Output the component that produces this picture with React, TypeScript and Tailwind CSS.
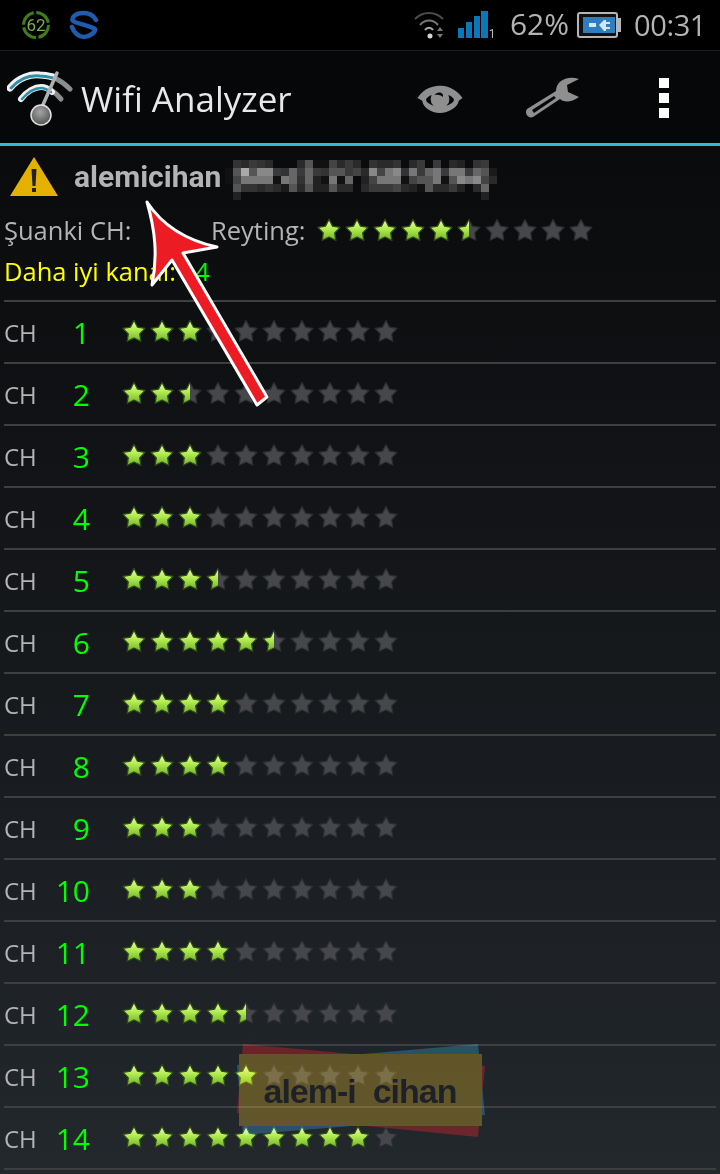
import React from "react";

const STAR = "M12 1.5 L15.5 8.1 L23 9.4 L17.7 14.9 L18.8 22.3 L12 19 L5.2 22.3 L6.3 14.9 L1 9.4 L8.5 8.1 Z";

function Star({ fill }: { fill: 0 | 0.5 | 1 }) {
  return (
    <svg width="24" height="24" viewBox="0 0 24 24" className="shrink-0 block">
      <path d={STAR} fill="#45474a" stroke="#2b2d30" strokeWidth="1.2" strokeLinejoin="round" />
      {fill > 0 && (
        <g clipPath={fill === 0.5 ? "url(#halfClip)" : undefined}>
          <path d={STAR} fill="url(#starGreen)" stroke="#2c4a14" strokeWidth="1.2" strokeLinejoin="round" />
        </g>
      )}
    </svg>
  );
}

function Stars({ value }: { value: number }) {
  return (
    <div className="flex gap-[4px]">
      {Array.from({ length: 10 }, (_, i) => (
        <Star key={i} fill={value >= i + 1 ? 1 : value >= i + 0.5 ? 0.5 : 0} />
      ))}
    </div>
  );
}

const rows: [number, number][] = [
  [1, 3], [2, 2.5], [3, 3], [4, 3], [5, 3.5], [6, 5.5], [7, 4],
  [8, 4], [9, 3], [10, 3], [11, 4], [12, 4.5], [13, 5], [14, 9],
];

const B = "transparent";
const pixels = [
  B,"#333","#2a2a2a","#3a3a3a","#333","#2a2a2a",B,B,B,"#2a2a2a","#555","#111","#111","#444","#2a2a2a","#3a3a3a","#2a2a2a",B,"#333","#2a2a2a","#2a2a2a","#333",B,"#2a2a2a","#3a3a3a",B,"#3a3a3a",B,"#2a2a2a","#222",B,"#333","#3a3a3a",B,
  "#111","#555","#aaa","#555","#888","#888","#3a3a3a","#333","#666","#3a3a3a","#666","#3a3a3a","#333","#555","#555","#3a3a3a","#444","#2a2a2a","#888","#444","#777","#888","#333","#777","#3a3a3a","#666","#777","#3a3a3a","#777","#777","#3a3a3a","#666","#555","#1a1a1a",
  "#111","#444","#777","#777","#777","#777","#111","#777","#666","#333","#666","#222","#111","#777","#111","#666","#0a0a0a","#222","#444","#777","#777","#777","#111","#444","#555","#555","#777","#111","#555","#888","#777","#888","#444","#2a2a2a",
  B,"#555","#333","#333","#2a2a2a","#333","#2a2a2a","#1a1a1a","#555","#2a2a2a","#555","#222","#222","#555","#2a2a2a","#2a2a2a",B,"#2a2a2a","#3a3a3a","#3a3a3a","#3a3a3a","#444","#2a2a2a","#222","#111","#555","#2a2a2a","#2a2a2a","#3a3a3a","#222",B,"#2a2a2a","#666",B,
  B,"#222",B,B,B,B,B,B,B,B,B,B,B,B,B,B,B,B,B,B,B,B,B,B,B,B,B,B,B,B,B,B,"#222",B,
];

function Wifi() {
  return (
    <svg width="66" height="64" viewBox="0 0 66 64" className="block">
      <defs>
        <radialGradient id="ball" cx="0.45" cy="0.35" r="0.7">
          <stop offset="0" stopColor="#a5a5a5" />
          <stop offset="1" stopColor="#4e4e4e" />
        </radialGradient>
      </defs>
      <path d="M3 23 C12 12 24 9 33 10 C44 10 54 15 63 24" fill="none" stroke="#8d8d8d" strokeWidth="5" strokeLinecap="round" />
      <path d="M3 23 C12 12 24 9 33 10 C38 10 42 11 46 12" fill="none" stroke="#f2f2f2" strokeWidth="7" strokeLinecap="round" />
      <path d="M4 23 C13 13 24 10 33 11 C38 11 42 12 46 13" fill="none" stroke="#2f8fa8" strokeWidth="3" strokeLinecap="round" />
      <path d="M14 34 C20 26 28 22 34 22 C41 22 48 27 54 34" fill="none" stroke="#8d8d8d" strokeWidth="5" strokeLinecap="round" />
      <path d="M14 34 C20 26 28 22 34 22 C38 22 42 24 45 27" fill="none" stroke="#f2f2f2" strokeWidth="6" strokeLinecap="round" />
      <path d="M15 34 C21 27 28 23 34 23 C38 23 41 25 44 27" fill="none" stroke="#2f8fa8" strokeWidth="2.5" strokeLinecap="round" />
      <path d="M50 8 L35 42" stroke="#b0b0b0" strokeWidth="3.5" strokeLinecap="round" />
      <circle cx="34" cy="50" r="10" fill="url(#ball)" stroke="#e2e2e2" strokeWidth="1.5" />
    </svg>
  );
}

function App() {
  return (
    <div className="relative w-[720px] h-[1174px] overflow-hidden bg-gradient-to-b from-[#070708] to-[#23282d] font-['Open_Sans','Roboto',sans-serif] text-[#b4b4b4]">
      <svg width="0" height="0" className="absolute">
        <defs>
          <linearGradient id="starGreen" x1="0" y1="0" x2="0" y2="1">
            <stop offset="0" stopColor="#eefcb0" />
            <stop offset="0.45" stopColor="#b2ec50" />
            <stop offset="1" stopColor="#70b22a" />
          </linearGradient>
          <clipPath id="halfClip"><rect x="0" y="0" width="12" height="24" /></clipPath>
        </defs>
      </svg>

      {/* Status bar */}
      <div className="h-[51px] bg-black border-b border-[#1c1c1c] flex items-center justify-between pl-[21px] pr-[14px]">
        <div className="flex items-center gap-[18px]">
          <svg width="30" height="30" viewBox="0 0 30 30" className="block">
            <circle cx="15" cy="15" r="12.5" fill="none" stroke="#3f7f1b" strokeWidth="3" strokeDasharray="17 2.6" />
            <text x="15" y="21" fontSize="17" textAnchor="middle" fill="#7bb04a" fontFamily="Roboto">62</text>
          </svg>
          <svg width="30" height="30" viewBox="0 0 30 30" className="block">
            <path d="M27 10 C24 4 18 3 14 3 C7 3 2 7 4 11 C6 13 22 16 26 19 C27 22 20 27 15 27 C10 27 5 23 3 17" fill="none" stroke="#1f5cb0" strokeWidth="4.5" strokeLinecap="round" strokeLinejoin="round" />
          </svg>
        </div>
        <div className="flex items-center">
          <svg width="34" height="30" viewBox="0 0 34 30" className="block">
            <path d="M2 9 C10 1 22 1 30 9" fill="none" stroke="#4c4c4c" strokeWidth="2" />
            <path d="M7 15 C12 9 20 9 25 15" fill="none" stroke="#777" strokeWidth="2" />
            <path d="M12 20 C14 17 18 17 20 20" fill="none" stroke="#aaa" strokeWidth="2" />
            <circle cx="17" cy="26" r="2.5" fill="#d5d5d5" />
            <path d="M24 21 L27 17 L30 21 Z M24 24 L27 28 L30 24 Z" fill="#777" />
          </svg>
          <svg width="38" height="30" viewBox="0 0 38 30" className="block ml-[11px]">
            <rect x="0" y="18" width="6" height="10" fill="#0a78b8" />
            <rect x="8" y="12" width="6" height="16" fill="#0a78b8" />
            <rect x="16" y="6" width="6" height="22" fill="#0a78b8" />
            <rect x="23" y="1" width="7" height="27" fill="#0a78b8" />
            <text x="34" y="28" fontSize="12" textAnchor="middle" fill="#bbb" fontFamily="Roboto">1</text>
          </svg>
          <span className="ml-[14px] -mt-[2px] text-[30px] leading-none text-[#b4b4b4]">62%</span>
          <svg width="44" height="26" viewBox="0 0 44 26" className="block ml-[8px]">
            <rect x="1" y="1" width="39" height="24" rx="2" fill="#111" stroke="#b5b5b5" strokeWidth="2" />
            <rect x="41" y="6" width="3" height="14" fill="#b5b5b5" />
            <rect x="6" y="5" width="32" height="16" fill="#2f7dbd" />
            <rect x="12" y="11" width="7" height="4" fill="#d5e5f2" />
            <path d="M22 13 L27 8 H29 V10 H33 V12 H29 V15 H33 V17 H29 V19 H27 Z" fill="#d5e5f2" />
          </svg>
          <span className="ml-[13px] -mt-[2px] text-[29px] tracking-[-0.4px] leading-none text-[#b4b4b4]">00:31</span>
        </div>
      </div>

      {/* Action bar */}
      <div className="relative h-[92px] flex items-center bg-[#060708]">
        <div className="ml-[7px]"><Wifi /></div>
        <span className="ml-[8px] mt-[3px] text-[35px] leading-none text-[#e8e8e8]">Wifi Analyzer</span>
        <div className="ml-auto flex items-center mt-[1px]">
          <svg width="48" height="30" viewBox="0 0 50 32" className="block mr-[61px]">
            <path d="M1 16 C8 5 18 3 26 3 C36 3 44 9 49 16 L45 19 C44 26 34 32 25 32 C15 32 7 26 6 19 Z" fill="#8f8f8f" />
            <path d="M10 18 C14 9 36 9 40 18 C37 27 13 27 10 18 Z" fill="#060708" />
            <circle cx="25" cy="17" r="10" fill="#8f8f8f" />
            <path d="M19 13 C22 8 30 10 28 15 C26 13 22 12 19 13 Z" fill="#060708" />
          </svg>
          <svg width="56" height="42" viewBox="0 0 56 42" className="block mr-[78px]">
            <path d="M2 32 L31 14 C31 5 41 -2 54 2 L42 8 L43 15 L54 20 C46 26 38 25 35 22 L8 40 C3 42 -1 36 2 32 Z" fill="#8f8f8f" />
            <path d="M7 33 L29 19 L31 21 L9 36 Z" fill="#060708" />
          </svg>
          <div className="flex flex-col gap-[5px] mr-[51px]">
            <div className="w-[10px] h-[10px] bg-white" />
            <div className="w-[10px] h-[10px] bg-white" />
            <div className="w-[10px] h-[10px] bg-white" />
          </div>
        </div>
      </div>
      <div className="h-[3px] bg-[#33b5e5]" />

      {/* Network info */}
      <div className="h-[155px] px-[4px] flex flex-col">
        <div className="h-[59px] flex items-center">
          <svg width="50" height="42" viewBox="0 0 50 42" className="block ml-[5px]">
            <path d="M25 2 L49 41 H1 Z" fill="#e5b100" />
            <path d="M22.5 14 H27.5 L26.5 31 H23.5 Z M23 33 H27 V37 H23 Z" fill="#222" />
          </svg>
          <span className="ml-[15px] mt-[3px] text-[30px] leading-none font-bold text-[#b4b4b4] font-['Roboto','Liberation_Sans',sans-serif]">alemicihan</span>
          <div className="ml-[4px] mt-[9px] grid grid-cols-[repeat(34,8px)] grid-rows-[repeat(5,8px)]">
            {pixels.map((c, i) => <div key={i} style={{ backgroundColor: c }} />)}
          </div>
        </div>
        <div className="h-[52px] flex items-center">
          <span className="text-[25.5px] leading-none w-[207px] shrink-0">Şuanki CH:</span>
          <span className="text-[25.5px] leading-none w-[106px] shrink-0">Reyting:</span>
          <div className="-translate-y-[1px]"><Stars value={5.5} /></div>
        </div>
        <div className="h-[32px] flex items-center text-[25.5px] leading-none -mt-[1px]">
          <span className="text-[#ffff00] w-[191px] shrink-0">Daha iyi kanal:</span>
          <span className="text-[#00ff00]">4</span>
        </div>
      </div>

      {/* Channels */}
      <div className="border-t-2 border-[#3e3f41] mx-[4px] -mt-[1px]">
        {rows.map(([ch, v]) => (
          <div key={ch} className="h-[62px] border-b-2 border-[#3e3f41] flex items-center">
            <span className="text-[24px] leading-none w-[50px] shrink-0 mt-[2px]">CH</span>
            <span className="text-[30px] leading-none text-[#00ff00] w-[36px] text-right shrink-0 mt-[2px]">{ch}</span>
            <div className="ml-[32px] -translate-y-[1px]"><Stars value={v} /></div>
          </div>
        ))}
      </div>

      {/* Arrow annotation */}
      <svg width="140" height="230" viewBox="0 0 140 230" className="absolute left-[140px] top-[190px]">
        <path d="M7 12 C22 35 45 50 77 57 L43 63 L127 207 L117 215 L32 70 L12 95 C18 65 15 40 7 12 Z" fill="#ed1c24" stroke="#fff" strokeWidth="3" strokeLinejoin="round" />
      </svg>

      {/* Watermark */}
      <svg width="260" height="100" viewBox="230 1040 260 100" className="absolute left-[230px] top-[1040px] mix-blend-screen">
        <polygon points="243,1044 485,1066 478,1137 237,1113" fill="#550000" />
        <polygon points="237,1065 478,1044 485,1115 243,1135" fill="#0d3347" />
        <rect x="239" y="1054" width="243" height="72" fill="#4a3800" />
      </svg>
      <div className="absolute left-[238px] top-[1054px] w-[244px] h-[72px] flex items-center justify-center">
        <span className="mt-[2px] text-[34px] font-bold leading-none text-[#1e2228] font-['Liberation_Sans',sans-serif] tracking-[-1px]">alem-i&nbsp; cihan</span>
      </div>
    </div>
  );
}

export default App;
